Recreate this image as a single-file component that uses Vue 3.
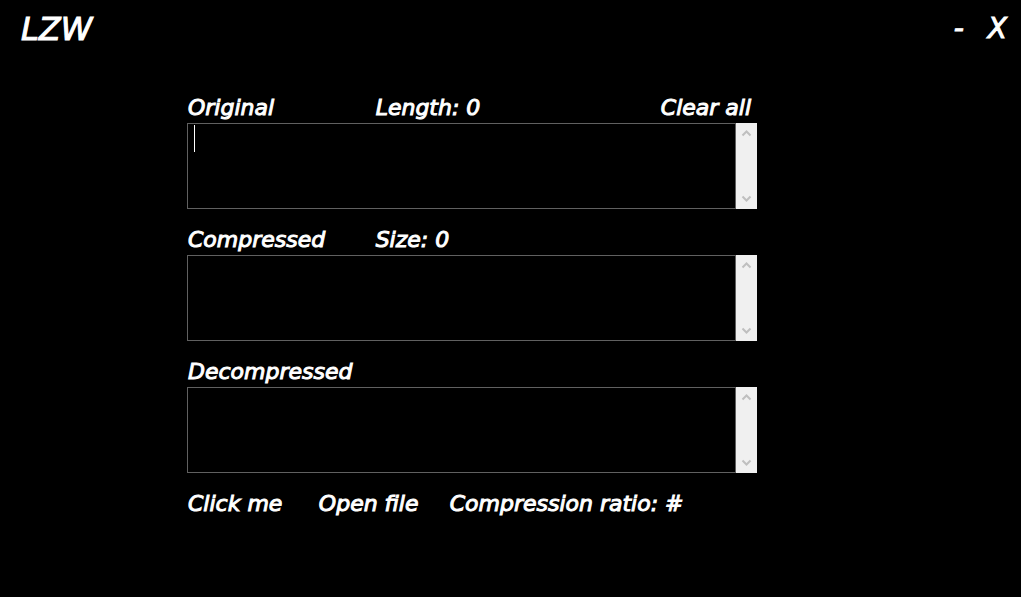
<script setup>
import { ref } from 'vue'

const original = ref('')
const compressed = ref('')
const decompressed = ref('')
const ratio = ref('#')

function clearAll() {
  original.value = ''
  compressed.value = ''
  decompressed.value = ''
  ratio.value = '#'
}
</script>

<template>
  <div class="window">
    <header class="titlebar">
      <h1>LZW</h1>
      <div class="controls">
        <button type="button" class="minimize" aria-label="Minimize">-</button>
        <button type="button" class="close" aria-label="Close">X</button>
      </div>
    </header>

    <main class="content">
      <section>
        <div class="caption">
          <label for="original">Original</label>
          <span>Length: {{ original.length }}</span>
          <button type="button" class="clear" @click="clearAll">Clear all</button>
        </div>
        <div class="field">
          <textarea id="original" v-model="original"></textarea>
          <i class="caret"></i>
          <div class="scrollbar">
            <svg width="11" height="8" viewBox="0 0 11 8"><path d="M1.5 6.5 5.5 2.5 9.5 6.5" /></svg>
            <svg width="11" height="8" viewBox="0 0 11 8"><path d="M1.5 1.5 5.5 5.5 9.5 1.5" /></svg>
          </div>
        </div>
      </section>

      <section>
        <div class="caption">
          <label for="compressed">Compressed</label>
          <span>Size: {{ compressed.length }}</span>
        </div>
        <div class="field">
          <textarea id="compressed" v-model="compressed"></textarea>
          <div class="scrollbar">
            <svg width="11" height="8" viewBox="0 0 11 8"><path d="M1.5 6.5 5.5 2.5 9.5 6.5" /></svg>
            <svg width="11" height="8" viewBox="0 0 11 8"><path d="M1.5 1.5 5.5 5.5 9.5 1.5" /></svg>
          </div>
        </div>
      </section>

      <section>
        <div class="caption">
          <label for="decompressed">Decompressed</label>
        </div>
        <div class="field">
          <textarea id="decompressed" v-model="decompressed"></textarea>
          <div class="scrollbar">
            <svg width="11" height="8" viewBox="0 0 11 8"><path d="M1.5 6.5 5.5 2.5 9.5 6.5" /></svg>
            <svg width="11" height="8" viewBox="0 0 11 8"><path d="M1.5 1.5 5.5 5.5 9.5 1.5" /></svg>
          </div>
        </div>
      </section>

      <footer class="actions">
        <button type="button">Click me</button>
        <button type="button">Open file</button>
        <span>Compression ratio: {{ ratio }}</span>
      </footer>
    </main>
  </div>
</template>

<style>
body {
  background: #000;
}
</style>

<style scoped>
.window {
  box-sizing: border-box;
  min-height: 100vh;
  background: #000;
  color: #fff;
  font: italic 500 22px/30px "DejaVu Sans", sans-serif;
  -webkit-text-stroke: 1px #fff;
}
button {
  padding: 0;
  border: 0;
  background: none;
  color: inherit;
  font: inherit;
  text-align: left;
  white-space: nowrap;
  cursor: pointer;
  -webkit-text-stroke: inherit;
}
.titlebar {
  display: flex;
  justify-content: space-between;
  padding: 9px 14px 0 21px;
}
h1 {
  margin: 0;
  font-size: 32px;
  font-weight: 500;
  line-height: 40px;
}
.controls {
  display: flex;
  gap: 24px;
  font-size: 28px;
  line-height: 36px;
}
.content {
  display: flex;
  flex-direction: column;
  gap: 16px;
  padding: 44px 264px 0 187px;
}
.caption {
  display: grid;
  grid-template-columns: 1fr 1fr 1fr;
  padding: 0 6px 0 1px;
  white-space: nowrap;
}
.clear {
  justify-self: end;
}
.field {
  position: relative;
  display: flex;
  height: 86px;
}
textarea {
  box-sizing: border-box;
  flex: 1;
  min-width: 0;
  margin: 0;
  padding: 2px 6px;
  border: 1px solid #606060;
  border-radius: 0;
  outline: none;
  background: #000;
  color: #fff;
  caret-color: transparent;
  font: inherit;
  resize: none;
  overflow: hidden;
}
.caret {
  position: absolute;
  top: 2px;
  left: 7px;
  width: 1px;
  height: 27px;
  background: #fff;
}
.scrollbar {
  box-sizing: border-box;
  display: flex;
  flex-direction: column;
  align-items: center;
  justify-content: space-between;
  width: 21px;
  padding: 6px 0;
  background: #f0f0f0;
}
.scrollbar path {
  fill: none;
  stroke: #bfbfbf;
  stroke-width: 2;
}
.actions {
  display: grid;
  grid-template-columns: 23% 23% 1fr;
  padding-left: 1px;
  white-space: nowrap;
}
</style>
